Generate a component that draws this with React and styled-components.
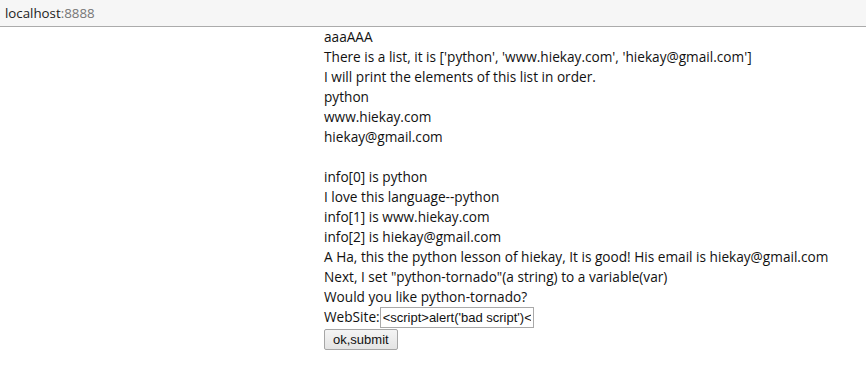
import React from 'react'
import styled, { createGlobalStyle } from 'styled-components'

const GlobalStyle = createGlobalStyle`
  html, body {
    margin: 0;
    padding: 0;
    background: #fff;
  }
`

const AddressBar = styled.div`
  height: 26px;
  background: #f6f6f6;
  border-bottom: 1px solid #ababab;
  display: flex;
  align-items: center;
  padding-left: 5px;
  font-family: "Open Sans", "DejaVu Sans", sans-serif;
  font-size: 13.3px;
  color: #222;
`

const Port = styled.span`
  color: #777;
`

const Page = styled.main`
  padding: 0 0 0 324px;
  font-family: "Open Sans", "DejaVu Sans", sans-serif;
  font-size: 13.65px;
  line-height: 20px;
  color: #111;
`

const Line = styled.div`
  min-height: 20px;
  white-space: nowrap;
`

const Form = styled.form`
  margin: 0;
  display: flex;
  flex-direction: column;
  align-items: flex-start;
`

const Field = styled.label`
  display: flex;
  align-items: center;
  height: 20px;
`

const Input = styled.input`
  width: 154px;
  height: 21px;
  box-sizing: border-box;
  margin: 0;
  padding: 0 2px;
  border: 1px solid #a9a9a9;
  font-family: "Liberation Sans", Arial, sans-serif;
  font-size: 13px;
  color: #111;
`

const Button = styled.button`
  margin-top: 2px;
  height: 21px;
  padding: 0 8px;
  border: 1px solid #a6a6a6;
  border-radius: 2px;
  background: linear-gradient(#f4f4f4, #e4e4e4);
  font-family: "Liberation Sans", Arial, sans-serif;
  font-size: 13px;
  color: #111;
`

const lines = [
  'aaaAAA',
  "There is a list, it is ['python', 'www.hiekay.com', 'hiekay@gmail.com']",
  'I will print the elements of this list in order.',
  'python',
  'www.hiekay.com',
  'hiekay@gmail.com',
  '',
  'info[0] is python',
  'I love this language--python',
  'info[1] is www.hiekay.com',
  'info[2] is hiekay@gmail.com',
  'A Ha, this the python lesson of hiekay, It is good! His email is hiekay@gmail.com',
  'Next, I set "python-tornado"(a string) to a variable(var)',
  'Would you like python-tornado?',
]

export default function App() {
  return (
    <>
      <GlobalStyle />
      <AddressBar>
        localhost<Port>:8888</Port>
      </AddressBar>
      <Page>
        {lines.map((text, i) => (
          <Line key={i}>{text}</Line>
        ))}
        <Form onSubmit={(e) => e.preventDefault()}>
          <Field>
            WebSite:
            <Input defaultValue="<script>alert('bad script')</script>" />
          </Field>
          <Button type="submit">ok,submit</Button>
        </Form>
      </Page>
    </>
  )
}
